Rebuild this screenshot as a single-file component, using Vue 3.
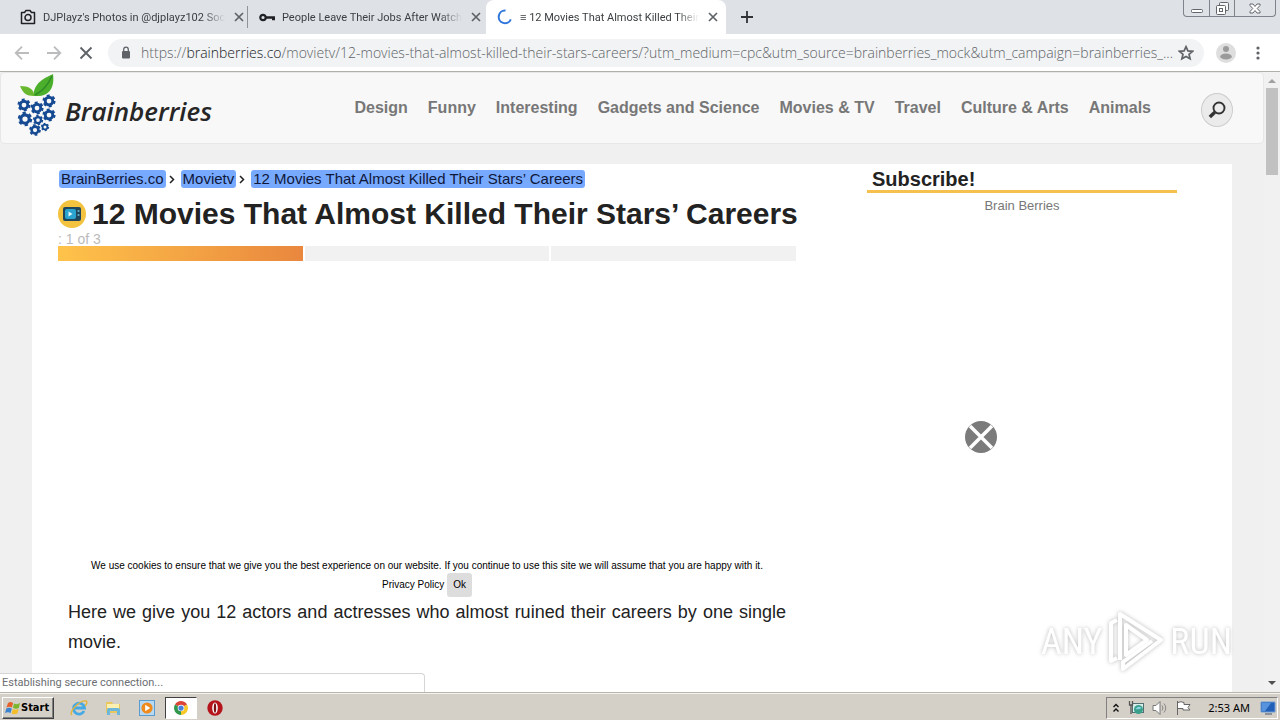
<template>
  <div class="desktop">
    <header class="tab-strip">
      <div v-for="tab in tabs" :key="tab.id" class="tab" :class="[tab.id, { active: tab.active }]">
        <svg v-if="tab.id === 'photos'" class="tab-icon" viewBox="0 0 16 16">
          <path d="M1.5 3.5h3l1.5-2h4l1.5 2h3v11h-13z" fill="none" stroke="#202124" stroke-width="1.5" stroke-linejoin="round" />
          <circle cx="8" cy="8.6" r="3" fill="none" stroke="#202124" stroke-width="1.5" />
        </svg>
        <svg v-else-if="tab.id === 'jobs'" class="tab-icon" viewBox="0 0 16 16">
          <circle cx="4" cy="8.5" r="2.7" fill="none" stroke="#202124" stroke-width="2.2" />
          <path d="M7 7.3h9v4h-3V9.8H7z" fill="#202124" />
        </svg>
        <svg v-else class="tab-icon" viewBox="0 0 16 16">
          <path d="M8.5 1.6a6.3 6.3 0 1 0 5.3 8.8" fill="none" stroke="#2f75dc" stroke-width="2" />
        </svg>
        <span class="tab-title">{{ tab.title }}</span>
        <button class="icon-button tab-close" aria-label="Close tab">
          <svg viewBox="0 0 10 10" width="10" height="10">
            <path d="M1 1l8 8M9 1l-8 8" stroke="#5f6368" stroke-width="1.7" />
          </svg>
        </button>
      </div>
      <button class="icon-button new-tab" aria-label="New tab">
        <svg viewBox="0 0 12 12" width="12" height="12">
          <path d="M6 0v12M0 6h12" stroke="#303236" stroke-width="1.8" />
        </svg>
      </button>
      <div class="window-controls">
        <button class="icon-button" aria-label="Minimize">
          <svg viewBox="0 0 12 12" width="12" height="12">
            <rect x=".5" y="7.5" width="11" height="3" rx="1" fill="#fff" stroke="#62656c" />
          </svg>
        </button>
        <button class="icon-button" aria-label="Restore">
          <svg viewBox="0 0 13 13" width="13" height="13">
            <rect x="3.5" y=".5" width="9" height="8" rx="1" fill="#f4f5f7" stroke="#62656c" />
            <rect x=".5" y="3.5" width="9" height="9" rx="1" fill="#fff" stroke="#62656c" />
            <rect x="3.5" y="6.5" width="3" height="3" fill="#fff" stroke="#62656c" />
          </svg>
        </button>
        <button class="icon-button wide" aria-label="Close window">
          <svg viewBox="0 0 12 11" width="12" height="11">
            <path d="M1 1h3l2 2.5L8 1h3v1.5L8.2 5.5 11 8.5V10H8L6 7.5 4 10H1V8.5l2.8-3L1 2.5z" fill="#fff" stroke="#62656c" />
          </svg>
        </button>
      </div>
    </header>

    <div class="toolbar">
      <button class="icon-button nav-button" aria-label="Back">
        <svg viewBox="0 0 16 16" width="16" height="16">
          <path d="M15 8H2M8 1.7L1.7 8 8 14.3" fill="none" stroke="#babcbe" stroke-width="1.8" />
        </svg>
      </button>
      <button class="icon-button nav-button" aria-label="Forward">
        <svg viewBox="0 0 16 16" width="16" height="16">
          <path d="M1 8h13M8 1.7L14.3 8 8 14.3" fill="none" stroke="#babcbe" stroke-width="1.8" />
        </svg>
      </button>
      <button class="icon-button nav-button" aria-label="Stop loading">
        <svg viewBox="0 0 16 16" width="16" height="16">
          <path d="M2.5 2.5l11 11M13.5 2.5l-11 11" stroke="#5f6368" stroke-width="1.9" />
        </svg>
      </button>
      <div class="address-bar">
        <svg class="lock" viewBox="0 0 10 13" width="10" height="13">
          <rect x="1" y="5" width="8" height="7.5" rx="1" fill="#5f6368" />
          <path d="M2.7 5.5V3.5a2.3 2.3 0 0 1 4.6 0v2" fill="none" stroke="#5f6368" stroke-width="1.3" />
        </svg>
        <div class="url">https://<span class="host">brainberries.co</span>{{ path }}</div>
        <button class="icon-button" aria-label="Bookmark this page">
          <svg viewBox="0 0 16 16" width="16" height="16">
            <path d="M8 1.7l1.9 4.2 4.6.4-3.5 3 1.1 4.5L8 11.4l-4.1 2.4L5 9.3l-3.5-3 4.6-.4z" fill="none" stroke="#5f6368" stroke-width="1.7" />
          </svg>
        </button>
      </div>
      <button class="icon-button profile" aria-label="Profile">
        <svg viewBox="0 0 20 20" width="20" height="20">
          <circle cx="10" cy="10" r="10" fill="#dedede" />
          <circle cx="10" cy="6" r="3" fill="#9b9b9b" />
          <ellipse cx="10" cy="13.5" rx="5.8" ry="3" fill="#9b9b9b" />
        </svg>
      </button>
      <button class="icon-button menu" aria-label="Menu">
        <svg viewBox="0 0 4 14" width="4" height="14">
          <circle cx="2" cy="2" r="1.6" fill="#5f6368" />
          <circle cx="2" cy="7" r="1.6" fill="#5f6368" />
          <circle cx="2" cy="12" r="1.6" fill="#5f6368" />
        </svg>
      </button>
    </div>

    <div class="viewport">
      <div class="page">
        <div class="site-header">
          <a href="#" class="brand">
            <svg class="berries" viewBox="0 0 40 62" width="40" height="62">
              <path d="M16 22C18 8 26 5 36 0c2 14-4 23-18 22z" fill="#4caf2c" />
              <path d="M18 21C26 17 31 11 35 2" fill="none" stroke="#2e8b25" stroke-width="1.5" />
              <path d="M3 12c9 0 14 3 14 10C9 22 6 19 3 12z" fill="#68b82f" />
              <g v-for="(gear, i) in gears" :key="i" :transform="`translate(${gear.x} ${gear.y}) scale(${gear.s})`">
                <circle r="4" fill="#f8f8f8" stroke="#164b93" stroke-width="3" />
                <circle r="5.8" fill="none" stroke="#164b93" stroke-width="2.2" stroke-dasharray="3.1 2.97" />
              </g>
            </svg>
            <span class="brand-name">Brainberries</span>
          </a>
          <nav class="site-nav">
            <a v-for="item in navItems" :key="item" href="#">{{ item }}</a>
          </nav>
          <button class="search-button" aria-label="Search">
            <svg viewBox="0 0 18 18" width="18" height="18">
              <circle cx="11" cy="7" r="5.5" fill="none" stroke="#333" stroke-width="1.9" />
              <path d="M6.8 11.2L1.8 16" stroke="#333" stroke-width="3.4" />
            </svg>
          </button>
        </div>

        <main class="content">
          <article class="post">
            <div class="breadcrumbs">
              <template v-for="(crumb, i) in crumbs" :key="crumb">
                <svg v-if="i > 0" class="crumb-arrow" viewBox="0 0 6 9" width="6" height="9">
                  <path d="M1 1l3.5 3.5L1 8" fill="none" stroke="#222" stroke-width="1.5" />
                </svg>
                <a href="#">{{ crumb }}</a>
              </template>
            </div>
            <div class="title-row">
              <svg class="category-icon" viewBox="0 0 28 28" width="28" height="28">
                <circle cx="14" cy="14" r="14" fill="#f3c33f" />
                <rect x="5" y="7" width="18" height="14" rx="2" fill="#20465b" />
                <rect x="7" y="9" width="11" height="10" rx="2" fill="#2ba4cf" />
                <path d="M10.5 11.5v5l4-2.5z" fill="#e8f8ff" />
                <circle cx="20.5" cy="11" r="1.1" fill="#66b3c9" />
                <circle cx="20.5" cy="15" r="1.1" fill="#66b3c9" />
              </svg>
              <h1>12 Movies That Almost Killed Their Stars’ Careers</h1>
            </div>
            <div class="page-count">: 1 of 3</div>
            <div class="progress">
              <span v-for="n in 3" :key="n" :class="{ done: n === 1 }"></span>
            </div>
            <div class="ad-slot"></div>
            <div class="cookie-notice">
              We use cookies to ensure that we give you the best experience on our website. If you
              continue to use this site we will assume that you are happy with it.
              <div class="cookie-actions">
                <a href="#">Privacy Policy</a>
                <button>Ok</button>
              </div>
            </div>
            <p class="lead">
              Here we give you 12 actors and actresses who almost ruined their careers by one single
              movie.
            </p>
          </article>

          <aside class="sidebar">
            <h2>Subscribe!</h2>
            <a href="#">Brain Berries</a>
            <button class="icon-button ad-close" aria-label="Close ad">
              <svg viewBox="0 0 32 32" width="32" height="32">
                <circle cx="16" cy="16" r="16" fill="#7b7b7b" />
                <path d="M5 5l22 22M27 5L5 27" stroke="#fff" stroke-width="3.5" />
              </svg>
            </button>
          </aside>
        </main>
      </div>

      <div class="scrollbar">
        <svg viewBox="0 0 8 4" width="8" height="4"><path d="M0 4l4-4 4 4z" fill="#a0a0a0" /></svg>
        <div class="thumb"></div>
        <svg class="down" viewBox="0 0 8 4" width="8" height="4"><path d="M0 0h8L4 4z" fill="#505050" /></svg>
      </div>

      <div class="status-bubble">Establishing secure connection...</div>

      <div class="watermark">
        <span>ANY</span>
        <svg viewBox="0 0 56 64" width="56" height="64">
          <g fill="none" stroke="#fff" stroke-width="4" stroke-linejoin="round">
            <path d="M12 50V4L53 30 15 59v-7l29-21" />
            <path d="M9 10L3 13v38l6-3M18 15v30l21-15z" />
          </g>
        </svg>
        <span>RUN</span>
      </div>
    </div>

    <footer class="taskbar">
      <button class="start">
        <svg viewBox="0 0 16 14" width="16" height="14">
          <path d="M3 2q3-2 5 0L7 6.5q-2-1.5-5.5 0z" fill="#e6602a" />
          <path d="M9 2.5q3 1.5 6-.5l-1.2 5q-3 1.5-5.8-.3z" fill="#7cb62e" />
          <path d="M1.3 7.5q3-1.5 5.5 0L5.6 12Q3 10.5 0 12z" fill="#3c84d0" />
          <path d="M7.8 8q3 1.5 5.8 0l-1.2 4.5q-3 1.5-5.8 0z" fill="#f4bd29" />
        </svg>
        <span>Start</span>
      </button>
      <div class="quick-launch">
        <button class="icon-button" aria-label="Internet Explorer">
          <svg viewBox="0 0 18 18" width="18" height="18">
            <path d="M14 12a5.5 5.5 0 1 1 .5-3H5" fill="none" stroke="#45a9e4" stroke-width="2.8" />
            <path d="M2 16C-2 13 10 1 16 2c2 1 0 4-1 5" fill="none" stroke="#e3b43a" stroke-width="1.4" />
          </svg>
        </button>
        <button class="icon-button" aria-label="Explorer">
          <svg viewBox="0 0 18 18" width="18" height="18">
            <path d="M2 3h6l1 2h7v9H2z" fill="#e8c75c" />
            <path d="M3 5h12v4H3z" fill="#fbf0b0" />
            <path d="M3 16v-5q0-2 2-2h9q2 0 2 2v5h-3v-4H6v4z" fill="#6db6dc" />
          </svg>
        </button>
        <button class="icon-button" aria-label="Media Player">
          <svg viewBox="0 0 18 18" width="18" height="18">
            <rect x="1.5" y="1.5" width="15" height="15" fill="#b7d9f2" stroke="#5a9bd0" />
            <circle cx="9" cy="9" r="5.6" fill="#ef8a1c" />
            <path d="M7.2 5.8v6.4L12.2 9z" fill="#fff" />
          </svg>
        </button>
        <button class="icon-button running" aria-label="Chrome">
          <svg viewBox="0 0 16 16" width="14" height="14">
            <path d="M8 8L1.1 4A8 8 0 0 1 14.9 4z" fill="#dc4437" />
            <path d="M8 8l6.9-4A8 8 0 0 1 8 16z" fill="#f7c928" />
            <path d="M8 8v8A8 8 0 0 1 1.1 4z" fill="#31974d" />
            <circle cx="8" cy="8" r="3.8" fill="#fff" />
            <circle cx="8" cy="8" r="3" fill="#4880de" />
          </svg>
        </button>
        <button class="icon-button" aria-label="Opera">
          <svg viewBox="0 0 18 18" width="18" height="18">
            <circle cx="9" cy="9" r="7.7" fill="#b5141b" />
            <ellipse cx="9" cy="9" rx="2.8" ry="5.6" fill="#fff" />
            <ellipse cx="9" cy="9" rx="1.2" ry="4.8" fill="#7a1216" />
          </svg>
        </button>
      </div>
      <div class="tray">
        <svg viewBox="0 0 8 10" width="8" height="10">
          <path d="M1.5 4L4 1.5 6.5 4M1.5 8.5L4 6l2.5 2.5" fill="none" stroke="#111" stroke-width="1.4" />
        </svg>
        <svg viewBox="0 0 16 16" width="16" height="16">
          <rect x="4.5" y="3.5" width="11" height="9" fill="#d9efec" stroke="#536f72" />
          <circle cx="10.5" cy="9.5" r="4.5" fill="#3aa08c" />
          <path d="M7.5 9q3-4 6-1-3 2-6 1z" fill="#8bd3e6" />
          <path d="M1.5 1v4h3V1M3 5v9" fill="none" stroke="#555" stroke-width="1.3" />
        </svg>
        <svg viewBox="0 0 16 16" width="16" height="16">
          <path d="M1 5.5h3l4-4v13l-4-4H1z" fill="#fff" stroke="#777" />
          <path d="M10 5.5q2 2.5 0 5M12 3.5q3.5 4.5 0 9M10 8h.1" fill="none" stroke="#888" />
        </svg>
        <svg viewBox="0 0 16 16" width="16" height="16">
          <path d="M1.5 1v14M2 2.5q3-1.5 6 0v2h6l-2 3 2 2.5H7V8.5H2" fill="#fff" stroke="#666" />
        </svg>
        <span class="clock">2:53 AM</span>
        <svg viewBox="0 0 16 14" width="16" height="14">
          <path d="M1 1h14v10H1z" fill="#2260b8" stroke="#6c9bd5" />
          <path d="M2 2h9L5 10H2z" fill="#5794dd" />
          <path d="M5 13h7" stroke="#456" />
        </svg>
      </div>
    </footer>
  </div>
</template>

<script setup>
const tabs = [
  { id: 'photos', title: "DJPlayz's Photos in @djplayz102 Soc", active: false },
  { id: 'jobs', title: 'People Leave Their Jobs After Watch', active: false },
  { id: 'movies', title: '≡ 12 Movies That Almost Killed Their', active: true }
]

const path =
  '/movietv/12-movies-that-almost-killed-their-stars-careers/?utm_medium=cpc&utm_source=brainberries_mock&utm_campaign=brainberries_...'

const navItems = [
  'Design',
  'Funny',
  'Interesting',
  'Gadgets and Science',
  'Movies & TV',
  'Travel',
  'Culture & Arts',
  'Animals'
]

const crumbs = ['BrainBerries.co', 'Movietv', '12 Movies That Almost Killed Their Stars’ Careers']

const gears = [
  { x: 7, y: 31, s: 0.95 },
  { x: 20, y: 34, s: 0.95 },
  { x: 32, y: 27, s: 0.95 },
  { x: 8, y: 45, s: 1.05 },
  { x: 32, y: 41, s: 0.95 },
  { x: 21, y: 46, s: 0.75 },
  { x: 28, y: 53, s: 0.6 },
  { x: 18, y: 56, s: 0.85 }
]
</script>

<style>
body {
  margin: 0;
  overflow: hidden;
}
</style>

<style scoped>
.desktop {
  display: flex;
  flex-direction: column;
  height: 100vh;
  font-family: 'Liberation Sans', Arial, sans-serif;
  background: #fff;
}

a {
  color: inherit;
  text-decoration: none;
}

svg {
  display: block;
  flex: none;
}

button {
  font: inherit;
}

.icon-button {
  display: flex;
  align-items: center;
  justify-content: center;
  flex: none;
  padding: 0;
  border: 0;
  background: none;
}

/* Tabs */
.tab-strip {
  position: relative;
  display: flex;
  flex: none;
  height: 34px;
  background: #dee1e6;
}

.tab {
  display: flex;
  align-items: center;
  box-sizing: border-box;
  width: 238px;
  padding: 0 7px 0 20px;
  font: 11px Roboto, sans-serif;
  color: #3c4043;
}

.tab.photos {
  width: 248px;
  border-right: 1px solid #909399;
  border-image: linear-gradient(transparent 20%, #909399 20%, #909399 80%, transparent 80%) 1;
}

.tab.jobs {
  padding-left: 11px;
}

.tab.active {
  width: 240px;
  padding: 0 8px 0 11px;
  border-radius: 8px 8px 0 0;
  background: #fff;
}

.tab-icon {
  width: 16px;
  height: 16px;
  margin-right: 7px;
}

.tab-title {
  flex: 1;
  white-space: nowrap;
  mask-image: linear-gradient(to right, #000 88%, transparent);
}

.tab-close {
  width: 16px;
  height: 16px;
  margin-left: 6px;
}

.new-tab {
  width: 42px;
}

.window-controls {
  position: absolute;
  top: 0;
  right: 4px;
  display: flex;
  height: 16px;
  border: 1px solid #7d828b;
  border-top: 0;
  border-radius: 0 0 4px 4px;
}

.window-controls .icon-button {
  width: 25px;
}

.window-controls .icon-button + .icon-button {
  border-left: 1px solid #7d828b;
}

.window-controls .icon-button.wide {
  width: 41px;
}

/* Toolbar */
.toolbar {
  display: flex;
  flex: none;
  align-items: center;
  box-sizing: border-box;
  height: 38px;
  padding: 0 12px 0 6px;
  border-bottom: 1px solid #aeb0aa;
}

.nav-button {
  width: 32px;
  height: 32px;
}

.address-bar {
  display: flex;
  flex: 1;
  align-items: center;
  min-width: 0;
  height: 28px;
  margin-left: 6px;
  padding: 0 10px 0 13px;
  border-radius: 14px;
  background: #f1f3f4;
}

.url {
  flex: 1;
  min-width: 0;
  margin-left: 10px;
  overflow: hidden;
  white-space: nowrap;
  font: 300 14px 'Open Sans', sans-serif;
  color: #5f6368;
}

.host {
  color: #202124;
}

.profile {
  width: 44px;
}

.menu {
  width: 20px;
}

/* Page */
.viewport {
  position: relative;
  display: flex;
  flex: 1;
  min-height: 0;
  background: #f0f0f0;
}

.page {
  display: flex;
  flex: 1;
  flex-direction: column;
  overflow: hidden;
}

.site-header {
  display: flex;
  flex: none;
  align-items: center;
  box-sizing: border-box;
  height: 72px;
  padding: 0 30px 0 16px;
  border: 1px solid #e7e7e7;
  border-radius: 5px;
  background: #f8f8f8;
}

.brand {
  display: flex;
  align-items: center;
  margin-bottom: 6px;
}

.brand-name {
  margin: 12px 0 0 8px;
  font: italic 600 26px 'Open Sans', sans-serif;
  color: #262626;
}

.site-nav {
  display: flex;
  gap: 20px;
  margin-left: auto;
  font-size: 16px;
  font-weight: bold;
  color: #777;
}

.search-button {
  display: flex;
  align-items: center;
  justify-content: center;
  width: 32px;
  height: 34px;
  margin: 4px 0 0 50px;
  padding: 0;
  border: 1px solid #ccc;
  border-radius: 50%;
  background: #ebebeb;
}

.content {
  display: grid;
  flex: 1;
  grid-template-columns: minmax(0, 1fr) 310px;
  gap: 71px;
  margin: 20px 32px 0;
  padding: 6px 55px 0 26px;
  background: #fff;
}

.breadcrumbs {
  display: flex;
  align-items: center;
  gap: 3px;
  padding-left: 1px;
  font-size: 15px;
  line-height: 18px;
  color: #10183a;
}

.breadcrumbs a {
  padding: 0 2px;
  border-radius: 3px;
  background: #77aaff;
}

.crumb-arrow {
  margin-right: 3px;
}

.title-row {
  display: flex;
  align-items: center;
  gap: 6px;
  margin-top: 8px;
}

h1 {
  margin: 0;
  font-size: 30px;
  line-height: 36px;
  white-space: nowrap;
  color: #222;
}

.page-count {
  font-size: 14px;
  line-height: 14px;
  color: #bbb;
}

.progress {
  display: grid;
  grid-template-columns: repeat(3, 1fr);
  gap: 2px;
}

.progress span {
  height: 15px;
  background: #f1f1f1;
}

.progress .done {
  background: linear-gradient(to right, #ffc34a, #e9873e);
}

.ad-slot {
  height: 298px;
}

.cookie-notice {
  font-size: 10px;
  line-height: 14px;
  text-align: center;
  color: #000;
}

.cookie-actions {
  display: flex;
  align-items: center;
  justify-content: center;
  gap: 3px;
}

.cookie-actions button {
  padding: 5px 6px;
  border: 0;
  border-radius: 3px;
  background: #ddd;
}

.lead {
  margin: 0 10px;
  font-size: 18px;
  line-height: 30px;
  text-align: justify;
  color: #222;
}

.sidebar {
  position: relative;
  text-align: center;
  font-size: 13px;
  color: #777;
}

.sidebar h2 {
  margin: -2px 0 5px;
  padding-left: 5px;
  border-bottom: 3px solid #f6c04f;
  font-size: 20px;
  line-height: 22px;
  text-align: left;
  color: #222;
}

.ad-close {
  position: absolute;
  top: 251px;
  left: 98px;
}

.scrollbar {
  display: flex;
  flex-direction: column;
  align-items: center;
  flex: none;
  width: 16px;
  padding: 7px 0;
  background: #f1f1f1;
}

.thumb {
  width: 12px;
  height: 87px;
  margin-top: 5px;
  background: #c1c1c1;
}

.down {
  margin-top: auto;
}

.status-bubble {
  position: absolute;
  bottom: 0;
  left: 0;
  box-sizing: border-box;
  width: 425px;
  padding-left: 2px;
  border: 1px solid #d5d5d5;
  border-width: 1px 1px 0 0;
  border-radius: 0 4px 0 0;
  font: 11px/18px Roboto, sans-serif;
  color: #6b6e72;
  background: #fff;
}

.watermark {
  position: absolute;
  right: 48px;
  bottom: 18px;
  display: flex;
  align-items: center;
  gap: 6px;
  font: 36px 'Roboto Condensed', Roboto, sans-serif;
  color: #fff;
  filter: drop-shadow(0 0 2px #bbb);
}

/* Taskbar */
.taskbar {
  display: flex;
  flex: none;
  align-items: center;
  box-sizing: border-box;
  height: 28px;
  padding: 2px 2px 0;
  border-top: 1px solid #b8b5ad;
  background: #d4d0c8;
  box-shadow: inset 0 1px #f5f3ef;
}

.start {
  display: flex;
  align-items: center;
  height: 22px;
  padding: 0 4px 0 2px;
  border: 1px solid;
  border-color: #fff #404040 #404040 #fff;
  font: bold 11px 'DejaVu Sans Condensed', 'DejaVu Sans', sans-serif;
  color: #000;
  background: #d4d0c8;
  box-shadow: inset -1px -1px #808080;
}

.quick-launch {
  display: flex;
  margin-left: 8px;
}

.quick-launch .icon-button {
  width: 34px;
  height: 22px;
}

.quick-launch .running {
  box-sizing: border-box;
  width: 32px;
  margin: 0 1px;
  border: 1px solid;
  border-color: #404040 #fff #fff #404040;
  background: #fff;
}

.tray {
  display: flex;
  align-items: center;
  gap: 8px;
  height: 20px;
  margin-left: auto;
  padding: 0 1px 0 5px;
  border: 1px solid;
  border-color: #808080 #fff #fff #808080;
  font: 11px 'Noto Sans', sans-serif;
  color: #000;
}

.clock {
  margin: 0 2px 0 8px;
}
</style>
